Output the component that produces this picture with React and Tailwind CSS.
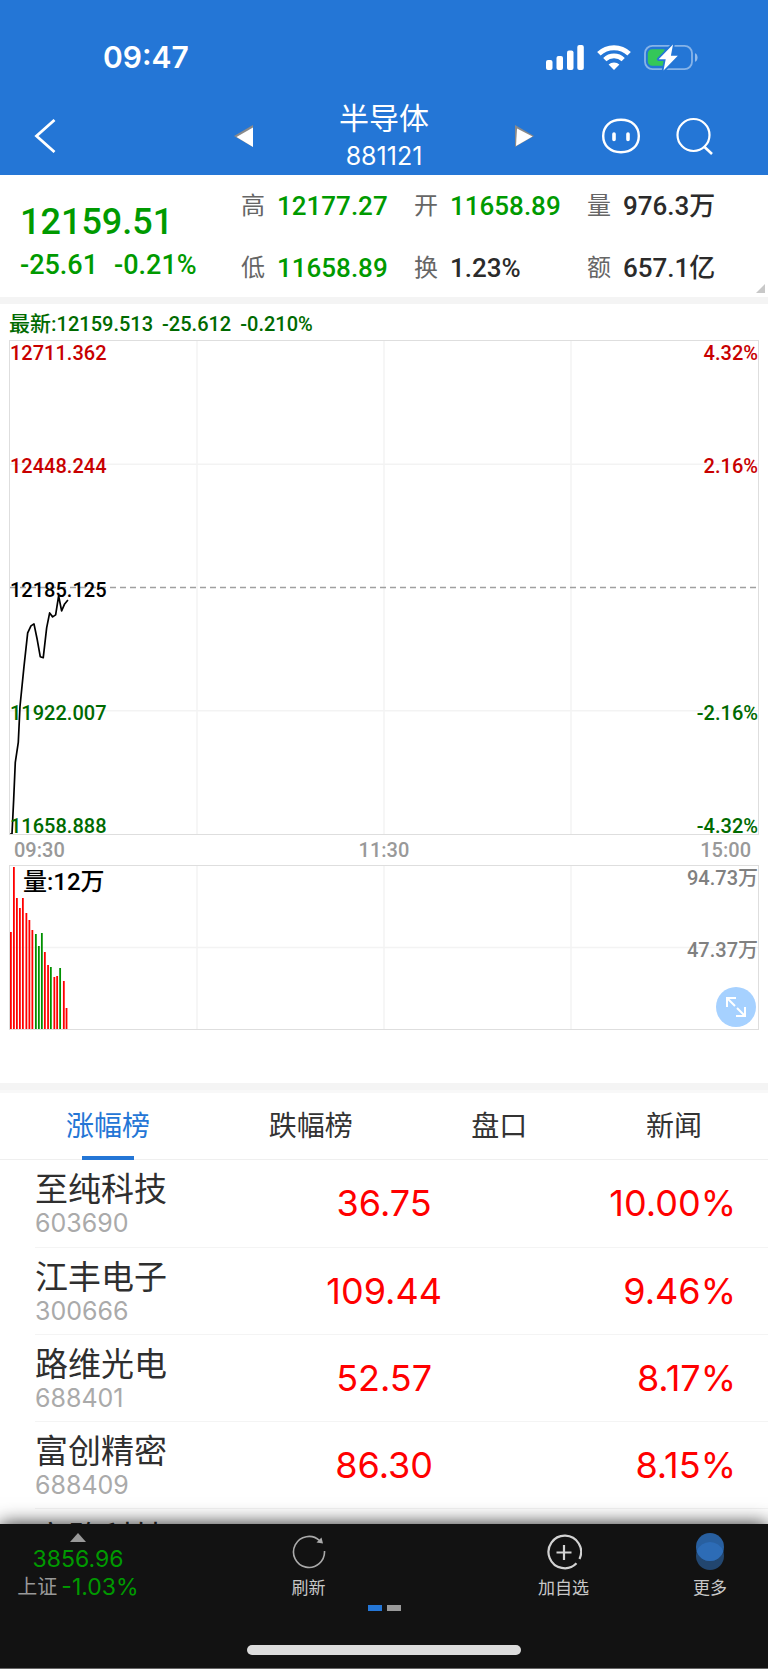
import React from "react";

const summary = [
  { label: "高", value: "12177.27", green: true },
  { label: "开", value: "11658.89", green: true },
  { label: "量", value: "976.3万" },
  { label: "低", value: "11658.89", green: true },
  { label: "换", value: "1.23%" },
  { label: "额", value: "657.1亿" },
];

const stocks = [
  { name: "至纯科技", code: "603690", price: "36.75", change: "10.00%" },
  { name: "江丰电子", code: "300666", price: "109.44", change: "9.46%" },
  { name: "路维光电", code: "688401", price: "52.57", change: "8.17%" },
  { name: "富创精密", code: "688409", price: "86.30", change: "8.15%" },
  { name: "安路科技" },
];

const priceLine =
  "0,495 3,495 4.7,460 6.3,423 9.3,403 11,367 15,327 18.7,293 22,286 25,284 28.3,300 31.3,317 34.3,318 37.7,288 40.7,273 43.7,277 46.7,275 49.7,256 52.7,271 55.7,264 59,260";

const volumes = [
  [2, 97, "r"], [5, 162, "r"], [8, 131, "r"], [11, 121, "r"], [14, 131, "r"],
  [17.5, 116, "r"], [20.5, 109, "r"], [23.5, 99, "r"], [27, 95, "g"], [30, 83, "g"],
  [33, 96, "g"], [36, 77, "r"], [39.2, 64, "r"], [42, 62, "g"], [45.5, 52, "r"],
  [48.3, 53, "r"], [51.3, 61, "g"], [55, 48, "r"], [57.7, 21, "r"],
];

function Grid({ rows }) {
  return (
    <svg className="absolute inset-0 h-full w-full" aria-hidden="true">
      {["25%", "50%", "75%"].map((x) => (
        <line key={x} x1={x} x2={x} y1="0" y2="100%" stroke="#f3f3f3" strokeWidth="1.5" />
      ))}
      {rows.map((y) => (
        <line key={y} x1="0" x2="100%" y1={y} y2={y} stroke="#f3f3f3" strokeWidth="1.5" />
      ))}
    </svg>
  );
}

function StatusBar() {
  return (
    <div className="flex h-[96px] items-center justify-between pt-[18px] pr-[70px] pl-[103px]">
      <span className="text-[30px] leading-9 font-semibold">09:47</span>
      <div className="flex items-center gap-[13px]">
        <svg width="38" height="25" viewBox="0 0 38 25" fill="#fff" aria-hidden="true">
          <rect x="0" y="15" width="6.5" height="10" rx="2" />
          <rect x="10.5" y="11" width="6.5" height="14" rx="2" />
          <rect x="21" y="5.5" width="6.5" height="19.5" rx="2" />
          <rect x="31.3" y="0" width="6.5" height="25" rx="2" />
        </svg>
        <svg width="34" height="25" viewBox="0 0 34 25" fill="none" aria-hidden="true">
          <path d="M1.9 8.8a21.6 21.6 0 0 1 30.2 0" stroke="#fff" strokeWidth="5" />
          <path d="M7.8 14.6a13.3 13.3 0 0 1 18.4 0" stroke="#fff" strokeWidth="4.6" />
          <path d="M17 25l-5.4-5.4a7.7 7.7 0 0 1 10.8 0z" fill="#fff" />
        </svg>
        <svg width="54" height="27" viewBox="0 0 54 27" fill="none" aria-hidden="true">
          <rect x="1" y="1.8" width="47" height="23.4" rx="7.5" stroke="#fff" strokeOpacity=".45" strokeWidth="1.8" />
          <path d="M51 9.2c3.4 1 3.4 7.6 0 8.6z" fill="#fff" fillOpacity=".5" />
          <path d="M8.2 5.2H20.5V21.8H8.2a4.4 4.4 0 0 1-4.4-4.4V9.6a4.4 4.4 0 0 1 4.4-4.4z" fill="#34c759" />
          <path d="M29 0.5L14.7 15.2H21.7L19.5 26.5L33.8 11.7H26.9z" fill="#fff" stroke="#2476d6" strokeWidth="3.5" strokeLinejoin="round" paintOrder="stroke" />
        </svg>
      </div>
    </div>
  );
}

function Header() {
  return (
    <header className="shrink-0 bg-[#2476d6] text-white">
      <StatusBar />
      <nav className="grid h-[79px] grid-cols-[1fr_auto_1fr] items-center px-[34px]">
        <button type="button" aria-label="返回" className="justify-self-start">
          <svg width="22" height="34" viewBox="0 0 22 34" fill="none" stroke="#fff" strokeWidth="2.8">
            <path d="M20.5 1L2.5 17L20.5 33" />
          </svg>
        </button>
        <div className="flex w-[300px] items-center justify-between">
          <button type="button" aria-label="上一个">
            <svg width="20" height="22" viewBox="0 0 20 22">
              <path d="M0 11L19 0V22z" fill="#8a8a8a" />
              <path d="M2.5 12L19 2.5V22z" fill="#fff" />
            </svg>
          </button>
          <div className="flex flex-col items-center">
            <h1 className="text-[30px] leading-10 font-normal">半导体</h1>
            <p className="text-[25px] leading-9 font-normal">881121</p>
          </div>
          <button type="button" aria-label="下一个">
            <svg width="20" height="22" viewBox="0 0 20 22">
              <path d="M1 0L20 11L1 22z" fill="#8a8a8a" />
              <path d="M3 3.5L18.5 11.5L2 21z" fill="#fff" />
            </svg>
          </button>
        </div>
        <div className="flex items-center gap-[34px] justify-self-end pr-[21px]">
          <button type="button" aria-label="智能助手">
            <svg width="40" height="36" viewBox="0 0 40 36" fill="none" stroke="#fff">
              <path d="M20 1.8C31 1.8 37.8 8.5 37.8 18S31 34.2 20 34.2S2.2 27.5 2.2 18S9 1.8 20 1.8z" strokeWidth="2.4" />
              <path d="M13 16v5.5M27 16v5.5" strokeWidth="3.6" strokeLinecap="round" />
            </svg>
          </button>
          <button type="button" aria-label="搜索">
            <svg width="38" height="38" viewBox="0 0 38 38" fill="none" stroke="#fff" strokeWidth="2.2">
              <circle cx="18.5" cy="18" r="16" />
              <path d="M29 29.5L37 37" strokeWidth="2.6" />
            </svg>
          </button>
        </div>
      </nav>
    </header>
  );
}

function Summary() {
  return (
    <section className="relative flex h-[122px] shrink-0 font-[Roboto,'Noto_Sans_CJK_SC',sans-serif] font-medium">
      <div className="w-[241px] shrink-0 pt-6 pl-5 text-[#009a00]">
        <p className="text-[36px] leading-[46px]">12159.51</p>
        <p className="flex gap-4 text-[27px] leading-10">
          <span>-25.61</span>
          <span>-0.21%</span>
        </p>
      </div>
      <dl className="grid flex-1 grid-cols-[173fr_173fr_181fr] grid-rows-[62px_62px]">
        {summary.map((s) => (
          <div key={s.label} className="flex items-center gap-3">
            <dt className="text-[24px] font-normal text-[#666]">{s.label}</dt>
            <dd className={s.green ? "text-[26px] text-[#009a00]" : "text-[26px] text-[#2b2b2b]"}>{s.value}</dd>
          </div>
        ))}
      </dl>
      <svg className="absolute right-[3px] bottom-1" width="9" height="9" viewBox="0 0 9 9" aria-hidden="true">
        <path d="M9 0V9H0z" fill="#c8c8c8" />
      </svg>
    </section>
  );
}

function Charts() {
  return (
    <section className="flex shrink-0 flex-col border-y-[7px] border-[#f4f4f4] px-[9px] pb-[53px] font-[Roboto,'Noto_Sans_CJK_SC',sans-serif] text-[20px] leading-6 font-medium">
      <p className="flex h-9 items-center gap-[9px] pt-[3px] text-[#006a00]">
        <span><span className="text-[21px]">最新:</span>12159.513</span>
        <span>-25.612</span>
        <span>-0.210%</span>
      </p>
      <div className="relative h-[495px] border border-[#dedede]">
        <Grid rows={["25%", "75%"]} />
        <svg className="absolute inset-0 h-full w-full" aria-hidden="true">
          <line x1="0" x2="100%" y1="50%" y2="50%" stroke="#a0a0a0" strokeWidth="1.5" strokeDasharray="6 4" />
        </svg>
        <svg className="absolute inset-0 h-full w-full" viewBox="1 0 749 495" preserveAspectRatio="none" role="img" aria-label="分时走势">
          <polyline points={priceLine} fill="none" stroke="#000" strokeWidth="1.7" strokeLinejoin="round" />
        </svg>
        <span className="absolute top-0 left-0 text-[#c80000]">12711.362</span>
        <span className="absolute top-1/4 left-0 mt-[2px] -translate-y-1/2 text-[#c80000]">12448.244</span>
        <span className="absolute top-1/2 left-0 mt-[2px] -translate-y-1/2 text-black">12185.125</span>
        <span className="absolute top-3/4 left-0 mt-[2px] -translate-y-1/2 text-[#006a00]">11922.007</span>
        <span className="absolute bottom-0 left-0 -mb-1 text-[#006a00]">11658.888</span>
        <span className="absolute top-0 right-0 text-[#c80000]">4.32%</span>
        <span className="absolute top-1/4 right-0 mt-[2px] -translate-y-1/2 text-[#c80000]">2.16%</span>
        <span className="absolute top-3/4 right-0 mt-[2px] -translate-y-1/2 text-[#006a00]">-2.16%</span>
        <span className="absolute right-0 bottom-0 -mb-1 text-[#006a00]">-4.32%</span>
      </div>
      <div className="grid h-[30px] grid-cols-3 items-center px-[5px] text-[#999]">
        <span>09:30</span>
        <span className="text-center">11:30</span>
        <span className="pr-[3px] text-right">15:00</span>
      </div>
      <div className="relative h-[165px] border border-[#dedede]">
        <Grid rows={["50%"]} />
        <svg className="absolute inset-0 h-full w-full" viewBox="1 0 749 163" preserveAspectRatio="none" role="img" aria-label="成交量">
          {volumes.map(([x, h, c]) => (
            <rect key={x} x={x - 1} y={163 - h} width="1.8" height={h} fill={c === "r" ? "#ff0000" : "#009000"} />
          ))}
        </svg>
        <span className="absolute top-0 left-[13px] text-[24px] leading-8 text-black">量:12万</span>
        <span className="absolute top-0 right-0 text-[#808080]">94.73万</span>
        <span className="absolute top-1/2 right-0 mt-[2px] -translate-y-1/2 text-[#808080]">47.37万</span>
        <button type="button" aria-label="全屏" className="absolute right-[2px] bottom-[2px] flex size-10 items-center justify-center rounded-full bg-[#a6d1ff]">
          <svg width="20" height="20" viewBox="0 0 20 20" fill="none" stroke="#fff" strokeWidth="2">
            <path d="M10 1H1V10M1 1L9 9M19 10V19H10M11 11L19 19" />
          </svg>
        </button>
      </div>
    </section>
  );
}

function Tabs() {
  return (
    <div className="flex h-[70px] shrink-0 items-stretch justify-between border-t-[3px] border-b border-t-[#f8f8f8] border-b-[#efefef] px-[66px] text-[28px] text-[#333]">
      <button type="button" aria-current="true" className="relative text-[#2476d6]">
        涨幅榜
        <span className="absolute inset-x-4 -bottom-px h-1 bg-[#2476d6]" />
      </button>
      <button type="button">跌幅榜</button>
      <button type="button">盘口</button>
      <button type="button">新闻</button>
    </div>
  );
}

function StockTable() {
  return (
    <div className="min-h-0 flex-1 overflow-hidden pl-[35px]">
      <table className="w-full table-fixed border-collapse">
        <tbody>
          {stocks.map((s) => (
            <tr key={s.name} className="h-[87px] border-b border-[#f4f4f4]">
              <td className="w-[32%] pt-[11px] align-top">
                <div className="text-[33px] leading-9 text-[#2f2f2f]">{s.name}</div>
                {s.code && <div className="text-[25px] leading-8 text-[#aaa]">{s.code}</div>}
              </td>
              <td className="w-[31%] pl-[2px] text-center text-[36px] leading-10 text-[#ff0000]">{s.price}</td>
              <td className="pr-8 text-right text-[36px] leading-10 text-[#ff0000]">{s.change}</td>
            </tr>
          ))}
        </tbody>
      </table>
    </div>
  );
}

function BottomBar() {
  return (
    <footer className="relative z-10 flex h-[145px] shrink-0 flex-col items-center border-b border-[#666] bg-[#121212] text-[17px] text-[#c8c8c8] shadow-[0_0_18px_rgba(0,0,0,0.85)]">
      <div className="grid w-full grid-cols-[156fr_305fr_205fr_88fr] pt-[9px] pr-[14px]">
        <button type="button" className="flex flex-col items-center text-[#009a00]">
          <svg width="16" height="9" viewBox="0 0 16 9" aria-hidden="true">
            <path d="M8 0L16 9H0z" fill="#999" />
          </svg>
          <span className="mt-[3px] text-[23px] leading-7">3856.96</span>
          <span className="flex items-center gap-1 text-[23px] leading-7">
            <span className="text-[20px] text-[#999]">上证</span>-1.03%
          </span>
        </button>
        <button type="button" className="flex flex-col items-center">
          <svg width="34" height="38" viewBox="0 0 34 38" fill="none" aria-hidden="true">
            <path d="M32.5 18A15.5 15.5 0 1 1 27.5 7.5" stroke="#aaa" strokeWidth="1.6" />
            <path d="M24.5 9.5L29.5 4.5L31 10.5z" fill="#aaa" />
          </svg>
          <span className="mt-[3px] leading-7">刷新</span>
        </button>
        <button type="button" className="flex flex-col items-center">
          <svg width="36" height="38" viewBox="0 0 36 38" fill="none" stroke="#d2d2d2" aria-hidden="true">
            <path d="M33.5 26A16.3 16.3 0 1 0 30.5 30.3" strokeWidth="2.2" />
            <path d="M18 12V27M10.5 19.5H25.5" strokeWidth="2.2" />
          </svg>
          <span className="mt-[3px] leading-7">加自选</span>
        </button>
        <button type="button" className="flex flex-col items-center">
          <svg width="28" height="38" viewBox="0 0 28 38" aria-hidden="true">
            <circle cx="14" cy="23" r="14" fill="#22466f" />
            <circle cx="14" cy="14" r="14" fill="#285f9f" />
            <path d="M0.74 18.5A14 14 0 0 1 27.26 18.5A14 14 0 0 1 0.74 18.5z" fill="#2d6cb6" />
          </svg>
          <span className="mt-[3px] leading-7">更多</span>
        </button>
      </div>
      <div className="mt-[3px] flex gap-[5px]">
        <span className="h-[6px] w-[14px] bg-[#2476d6]" />
        <span className="h-[6px] w-[14px] bg-[#999]" />
      </div>
      <div className="mt-auto mb-[13px] h-[10px] w-[274px] rounded-full bg-[#dcdcdc]" />
    </footer>
  );
}

export default function App() {
  return (
    <div className="flex h-screen flex-col overflow-hidden bg-white font-[Inter,'Noto_Sans_CJK_SC',sans-serif]">
      <Header />
      <main className="flex min-h-0 flex-1 flex-col">
        <Summary />
        <Charts />
        <Tabs />
        <StockTable />
      </main>
      <BottomBar />
    </div>
  );
}
